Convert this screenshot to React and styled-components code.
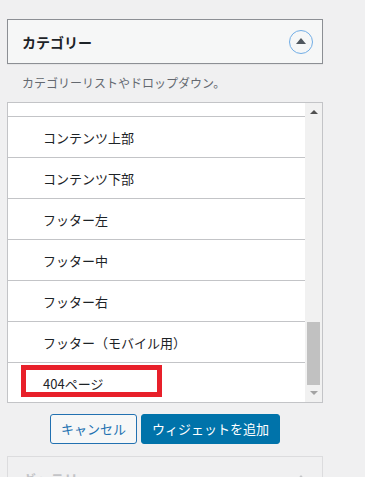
import React from 'react';
import styled, { createGlobalStyle } from 'styled-components';

const GlobalStyle = createGlobalStyle`
  html, body {
    margin: 0;
    padding: 0;
    background: #f0f0f1;
    font-family: "Noto Sans CJK JP", "Noto Sans", sans-serif;
    color: #1d2327;
    overflow: hidden;
  }
`;

const Column = styled.div`
  width: 316px;
  padding: 19px 0 0 7px;
`;

const WidgetHeader = styled.div`
  box-sizing: border-box;
  height: 45px;
  display: flex;
  align-items: center;
  justify-content: space-between;
  padding: 0 9px 0 14px;
  background: ${(p) => (p.$faded ? '#f0f0f1' : '#f6f7f7')};
  border: 1px solid ${(p) => (p.$faded ? '#dcdcde' : '#8c8f94')};
  box-shadow: ${(p) => (p.$faded ? 'none' : '0 1px 1px rgba(0,0,0,0.04)')};
`;

const Title = styled.h3`
  margin: 0;
  font-size: 14px;
  font-weight: 600;
  color: ${(p) => (p.$faded ? '#c3c4c7' : '#1d2327')};
  line-height: 1;
`;

const ToggleButton = styled.span`
  box-sizing: border-box;
  width: 24px;
  height: 24px;
  border-radius: 50%;
  border: ${(p) => (p.$faded ? 'none' : '1.5px solid #72aee6')};
  display: flex;
  align-items: center;
  justify-content: center;
`;

const Caret = styled.span`
  width: 0;
  height: 0;
  border-left: 5px solid transparent;
  border-right: 5px solid transparent;
  border-bottom: 6px solid ${(p) => (p.$faded ? '#c3c4c7' : '#50575e')};
  margin-top: -1px;
`;

const Description = styled.p`
  margin: 0;
  padding: 10px 14px 10px 15px;
  font-size: 12px;
  line-height: 18px;
  color: #646970;
`;

const ListBox = styled.div`
  box-sizing: border-box;
  height: 301px;
  border: 1px solid #c3c4c7;
  background: #fff;
  display: flex;
`;

const Viewport = styled.div`
  flex: 1;
  overflow: hidden;
`;

/* list is scrolled: the top row sits mostly above the visible area */
const Rows = styled.ul`
  list-style: none;
  margin: -27px 0 0;
  padding: 0;
`;

const Row = styled.li`
  position: relative;
  box-sizing: border-box;
  height: 41px;
  display: flex;
  align-items: center;
  padding-left: 35px;
  font-size: 13px;
  color: #1d2327;
  border-bottom: 1px solid #c3c4c7;
  &:last-child {
    border-bottom: none;
  }
`;

const Highlight = styled.span`
  position: absolute;
  box-sizing: border-box;
  top: 2px;
  left: 13px;
  width: 141px;
  height: 32px;
  border: 5px solid #e8202a;
`;

const Scrollbar = styled.div`
  width: 17px;
  background: #f1f1f1;
  display: flex;
  flex-direction: column;
`;

const ScrollArrow = styled.div`
  height: 17px;
  display: flex;
  align-items: center;
  justify-content: center;
  &::before {
    content: '';
    width: 0;
    height: 0;
    border-left: 4px solid transparent;
    border-right: 4px solid transparent;
    ${(p) =>
      p.$down
        ? 'border-top: 4px solid #a3a3a3; margin-top: -2px;'
        : 'border-bottom: 4px solid #505050; margin-top: 1px;'}
  }
`;

const Track = styled.div`
  flex: 1;
  display: flex;
  flex-direction: column;
  justify-content: flex-end;
  align-items: center;
`;

const Thumb = styled.div`
  width: 13px;
  height: 63px;
  background: #c1c1c1;
`;

const Actions = styled.div`
  display: flex;
  justify-content: center;
  gap: 4px;
  padding: 11px 0 12px;
`;

const Button = styled.button`
  box-sizing: border-box;
  height: 30px;
  padding: 0 10px;
  border-radius: 3px;
  font-family: inherit;
  font-size: 13px;
  line-height: 28px;
  cursor: pointer;
  border: 1px solid ${(p) => (p.$primary ? '#0073aa' : '#2271b1')};
  background: ${(p) => (p.$primary ? '#0073aa' : '#f6f7f7')};
  color: ${(p) => (p.$primary ? '#fff' : '#2271b1')};
`;

const NextWidget = styled.div`
  height: 200px;
`;

const items = [
  '',
  'コンテンツ上部',
  'コンテンツ下部',
  'フッター左',
  'フッター中',
  'フッター右',
  'フッター（モバイル用）',
  '404ページ',
];

export default function App() {
  return (
    <>
      <GlobalStyle />
      <Column>
        <WidgetHeader>
          <Title>カテゴリー</Title>
          <ToggleButton>
            <Caret />
          </ToggleButton>
        </WidgetHeader>
        <Description>カテゴリーリストやドロップダウン。</Description>
        <ListBox>
          <Viewport>
            <Rows>
              {items.map((item, i) => (
                <Row key={i}>
                  {i === items.length - 1 && <Highlight />}
                  {item}
                </Row>
              ))}
            </Rows>
          </Viewport>
          <Scrollbar>
            <ScrollArrow />
            <Track>
              <Thumb />
            </Track>
            <ScrollArrow $down />
          </Scrollbar>
        </ListBox>
        <Actions>
          <Button>キャンセル</Button>
          <Button $primary>ウィジェットを追加</Button>
        </Actions>
        <NextWidget>
          <WidgetHeader $faded>
            <Title $faded>ギャラリー</Title>
            <ToggleButton $faded>
              <Caret $faded />
            </ToggleButton>
          </WidgetHeader>
        </NextWidget>
      </Column>
    </>
  );
}
